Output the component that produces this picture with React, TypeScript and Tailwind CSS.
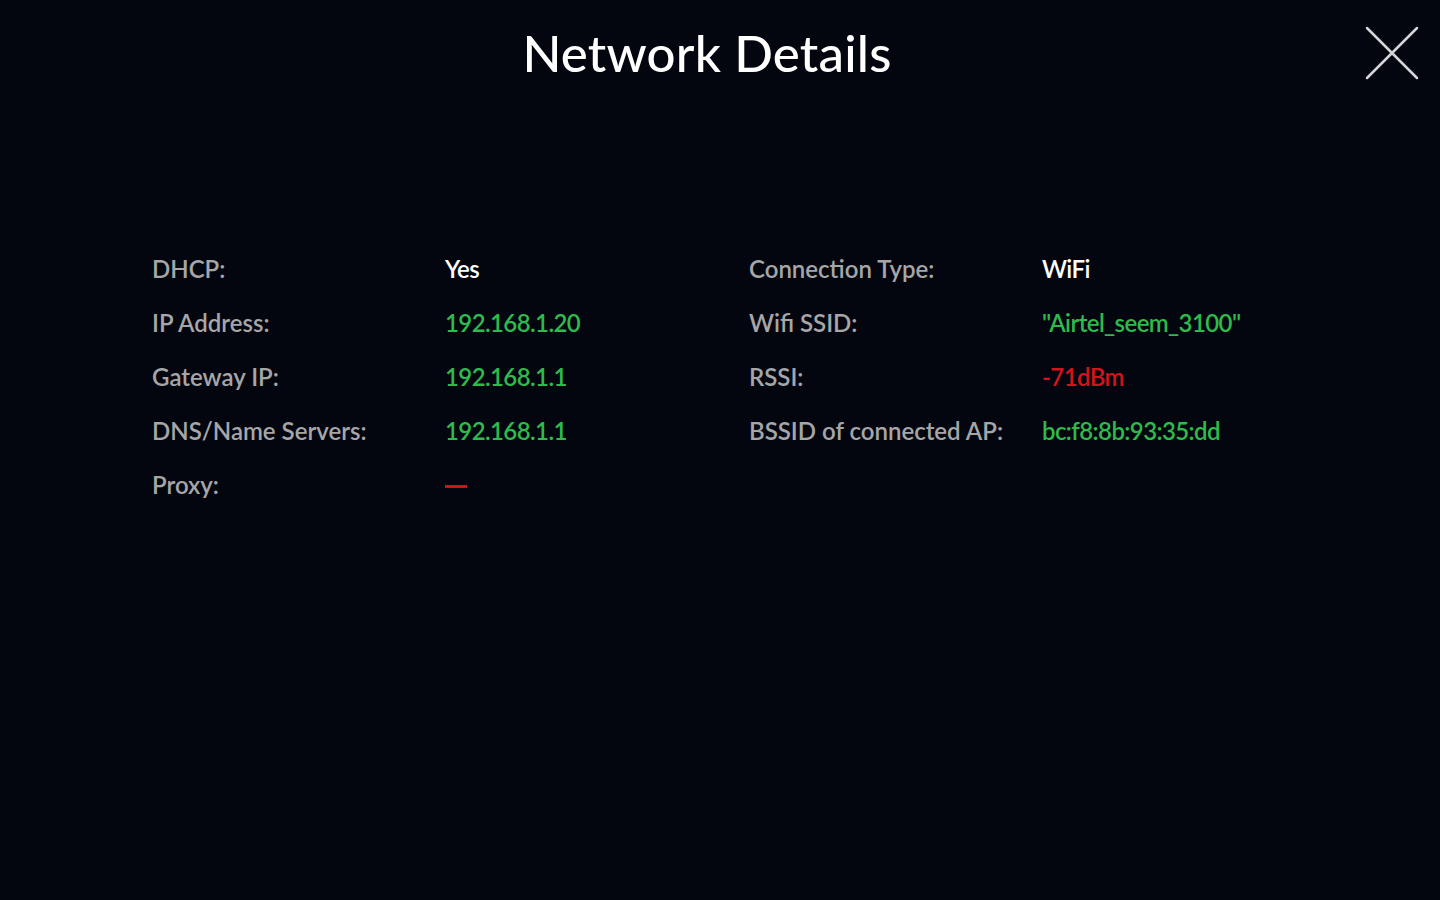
import React from 'react';

type Row = { label: string; value: string; tone: string };

const left: Row[] = [
  { label: 'DHCP:', value: 'Yes', tone: 'text-white' },
  { label: 'IP Address:', value: '192.168.1.20', tone: 'text-[#2fba4c]' },
  { label: 'Gateway IP:', value: '192.168.1.1', tone: 'text-[#2fba4c]' },
  { label: 'DNS/Name Servers:', value: '192.168.1.1', tone: 'text-[#2fba4c]' },
  { label: 'Proxy:', value: '', tone: 'text-[#d3141c]' },
];

const right: Row[] = [
  { label: 'Connection Type:', value: 'WiFi', tone: 'text-white' },
  { label: 'Wifi SSID:', value: '"Airtel_seem_3100"', tone: 'text-[#2fba4c]' },
  { label: 'RSSI:', value: '-71dBm', tone: 'text-[#d3141c]' },
  { label: 'BSSID of connected AP:', value: 'bc:f8:8b:93:35:dd', tone: 'text-[#2fba4c]' },
];

const Column = ({ rows }: { rows: Row[] }) => (
  <div className="flex flex-col">
    {rows.map((r) => (
      <div key={r.label} className="flex h-[54px] items-center text-[24px] font-semibold">
        <span className="w-[293px] shrink-0 text-[#a6a6a9]">{r.label}</span>
        {r.value ? (
          <span className={`${r.tone} tracking-[-0.6px]`}>{r.value}</span>
        ) : (
          <span className="mt-[2px] h-[3px] w-[22px] bg-[#c8141c]" aria-label="none" />
        )}
      </div>
    ))}
  </div>
);

export default function App() {
  return (
    <div className="relative h-[900px] w-[1440px] overflow-hidden bg-[#04060f] font-['Lato',sans-serif]">
      {/* Header */}
      <header className="flex h-[106px] items-center justify-center pr-[26px]">
        <h1 className="text-[51px] font-medium tracking-[0.2px] text-white">Network Details</h1>
      </header>

      <button className="absolute right-[20px] top-[25px] h-[56px] w-[56px]" aria-label="Close">
        <svg viewBox="0 0 56 56" className="h-full w-full" fill="none" stroke="#d6d6d8" strokeWidth="2.5" strokeLinecap="round">
          <path d="M3 3L53 53M53 3L3 53" />
        </svg>
      </button>

      {/* Details */}
      <div className="mt-[136px] flex pl-[152px]">
        <div className="w-[597px]">
          <Column rows={left} />
        </div>
        <Column rows={right} />
      </div>
    </div>
  );
}
